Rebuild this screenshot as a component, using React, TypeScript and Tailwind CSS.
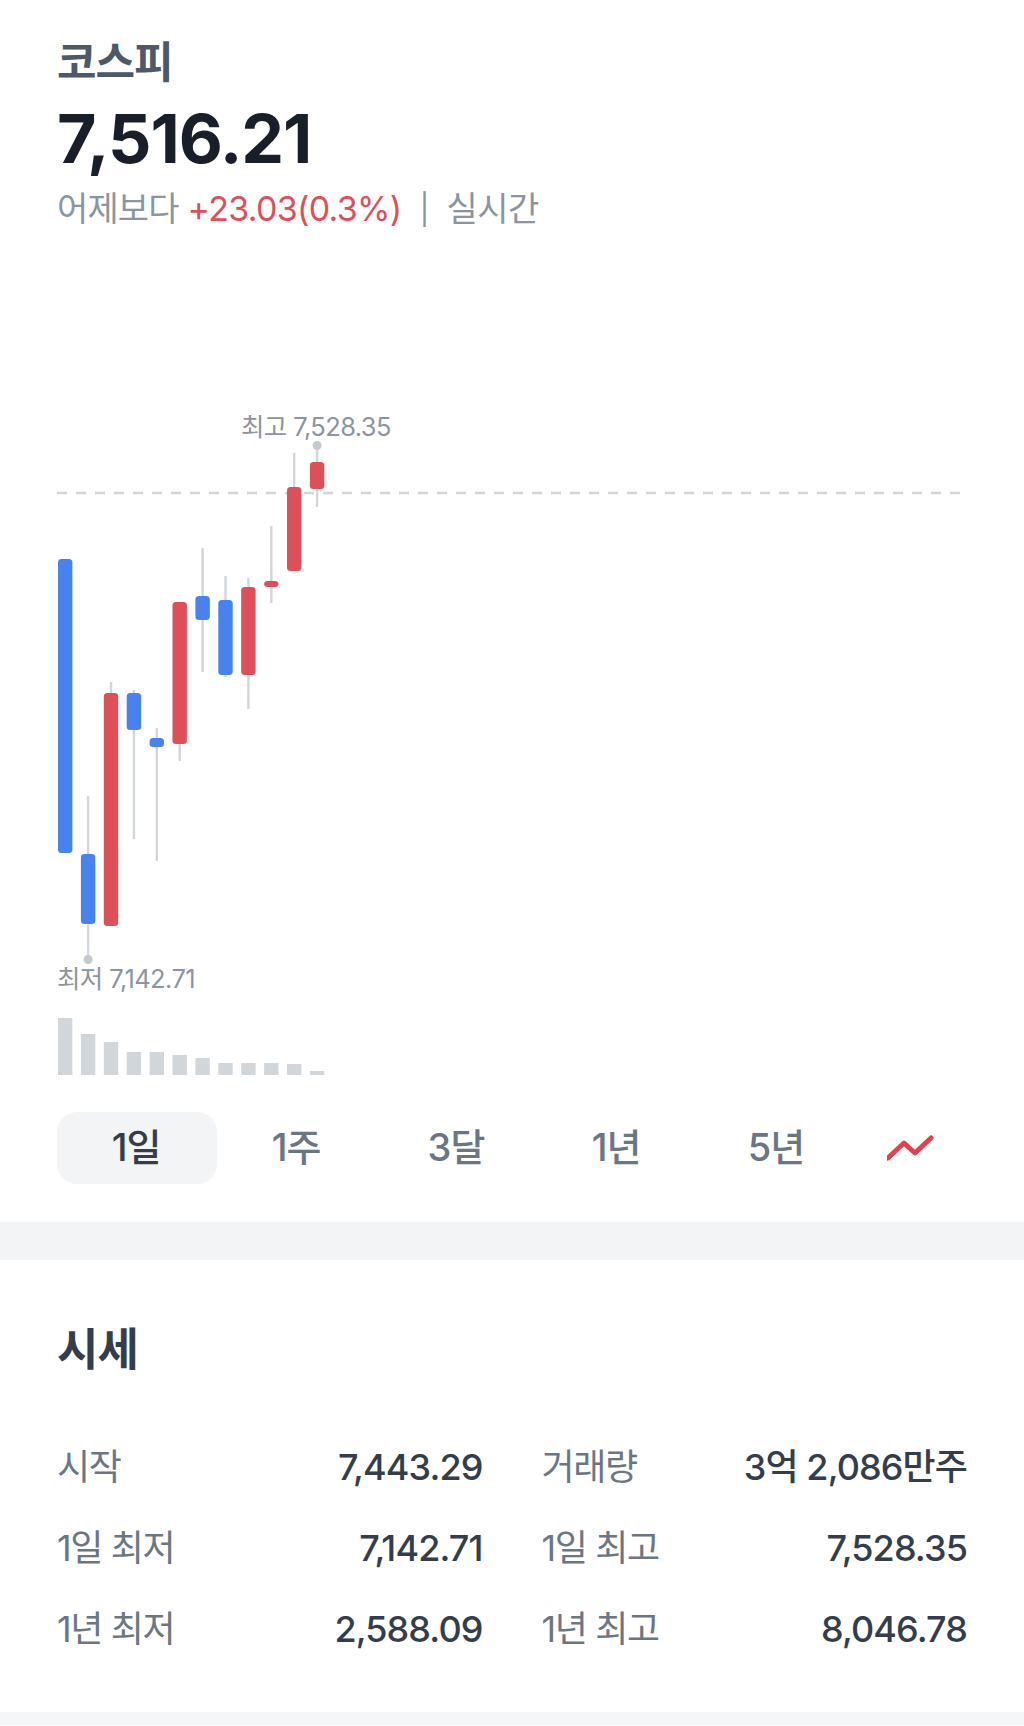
const sansKr = "font-['Inter','Noto_Sans_CJK_KR',sans-serif]";

const BLUE = '#4882ef';
const RED = '#dd5059';
const WICK = '#d1d6db';

// all y values are page pixels, the svg viewBox starts at 400
const candles = [
  { top: 559, bottom: 853, color: BLUE },
  { top: 854, bottom: 924, wickTop: 796, wickBottom: 960, color: BLUE },
  { top: 693, bottom: 926, wickTop: 682, wickBottom: 926, color: RED },
  { top: 693, bottom: 730, wickTop: 690, wickBottom: 839, color: BLUE },
  { top: 738, bottom: 747, wickTop: 728, wickBottom: 861, color: BLUE },
  { top: 602, bottom: 744, wickTop: 602, wickBottom: 761, color: RED },
  { top: 596, bottom: 620, wickTop: 548, wickBottom: 672, color: BLUE },
  { top: 600, bottom: 675, wickTop: 576, wickBottom: 677, color: BLUE },
  { top: 587, bottom: 675, wickTop: 578, wickBottom: 709, color: RED },
  { top: 581, bottom: 587, wickTop: 526, wickBottom: 603, color: RED },
  { top: 487, bottom: 571, wickTop: 453, wickBottom: 571, color: RED },
  { top: 462, bottom: 489, wickTop: 445, wickBottom: 507, color: RED },
];

const volumes = [1018, 1034, 1042, 1052, 1052, 1055, 1058, 1063, 1063, 1063, 1064, 1071];

const ranges = ['1일', '1주', '3달', '1년', '5년'];

const stats = [
  ['시작', '7,443.29', '거래량', '3억 2,086만주'],
  ['1일 최저', '7,142.71', '1일 최고', '7,528.35'],
  ['1년 최저', '2,588.09', '1년 최고', '8,046.78'],
];

function Chart() {
  return (
    <div className="relative h-[690px] w-full">
      <svg width="1024" height="690" viewBox="0 400 1024 690" className="block">
        <line x1="57" x2="964" y1="493" y2="493" stroke={WICK} strokeWidth="2.4" strokeDasharray="10 9" />
        {candles.map((c, i) => {
          const x = 58 + i * 22.9;
          return (
            <g key={i}>
              {c.wickTop !== undefined && (
                <rect x={x + 6} y={c.wickTop} width="2.4" height={c.wickBottom - c.wickTop} fill={WICK} />
              )}
              <rect x={x} y={c.top} width="14.4" height={c.bottom - c.top} rx="3.5" fill={c.color} />
            </g>
          );
        })}
        <circle cx={58 + 22.9 + 7.2} cy="959.5" r="4.5" fill="#c4c9d0" />
        <circle cx={58 + 11 * 22.9 + 7.2} cy="445.5" r="4.5" fill="#c4c9d0" />
        {volumes.map((top, i) => (
          <rect key={i} x={58 + i * 22.9} y={top} width="14.4" height={1075 - top} fill="#d1d6db" />
        ))}
      </svg>
      <span className="absolute left-[241px] top-[11px] text-[25.5px] leading-[32px] tracking-[-0.6px] text-[#8b95a1]">최고 7,528.35</span>
      <span className="absolute left-[57px] top-[563px] text-[25.5px] leading-[32px] tracking-[-0.6px] text-[#8b95a1]">최저 7,142.71</span>
    </div>
  );
}

function TrendIcon() {
  return (
    <svg width="50" height="30" viewBox="0 0 50 30" fill="none">
      <path d="M1 25 L17 10 L28 20 L44 5" stroke="#e5404f" strokeWidth="5" strokeLinecap="round" strokeLinejoin="round" />
    </svg>
  );
}

export default function App() {
  return (
    <div className={`${sansKr} min-h-[1726px] bg-white`}>
      <section className="px-[57px] pt-[34px]">
        <h1 className="text-[43px] leading-[56px] font-semibold tracking-[-1px] text-[#4e5968]">코스피</h1>
        <p className="mt-[12px] text-[68px] leading-[72px] font-bold tracking-[-1.1px] text-[#191f28]">7,516.21</p>
        <p className="mt-[11px] flex items-center text-[34px] leading-[48px] tracking-[-0.9px] text-[#8b95a1]">
          <span>어제보다</span>
          <span className="ml-[9px] tracking-[-0.7px] text-[#dd5059]">+23.03(0.3%)</span>
          <span className="mr-[18px] ml-[18px] text-[30px]">|</span>
          <span className="tracking-[-0.6px]">실시간</span>
        </p>
      </section>

      <div className="mt-[167px]">
        <Chart />
      </div>

      <nav className="mt-[22px] flex h-[72px] items-stretch px-[57px]">
        {ranges.map((r, i) => (
          <div
            key={r}
            className={
              i === 0
                ? 'flex w-[160px] items-center justify-center rounded-[20px] bg-[#f2f4f6] pr-[2px] pb-[2px] text-[38px] font-medium tracking-[-1px] text-[#333d4b]'
                : 'flex w-[160px] items-center justify-center pr-[2px] pb-[2px] text-[38px] font-medium tracking-[-1px] text-[#6b7684]'
            }
          >
            {r}
          </div>
        ))}
        <div className="flex flex-1 items-center justify-center">
          <TrendIcon />
        </div>
      </nav>

      <div className="mt-[38px] h-[38px] bg-[#f2f4f6]" />

      <section className="px-[57px] pt-[60px]">
        <h2 className="text-[45px] leading-[60px] font-bold tracking-[-1px] text-[#333d4b]">시세</h2>
        <div className="mt-[46px]">
          {stats.map((row) => (
            <div key={row[0]} className="grid h-[81px] grid-cols-2 items-center gap-x-[59px] text-[36px] tracking-[-0.9px]">
              <div className="flex justify-between">
                <span className="tracking-[-1.4px] text-[#6b7684]">{row[0]}</span>
                <span className="font-medium text-[#333d4b]">{row[1]}</span>
              </div>
              <div className="flex justify-between">
                <span className="tracking-[-1.4px] text-[#6b7684]">{row[2]}</span>
                <span className="font-medium text-[#333d4b]">{row[3]}</span>
              </div>
            </div>
          ))}
        </div>
      </section>

      <div className="mt-[43px] h-[13px] bg-[#f5f6f8]" />
    </div>
  );
}
